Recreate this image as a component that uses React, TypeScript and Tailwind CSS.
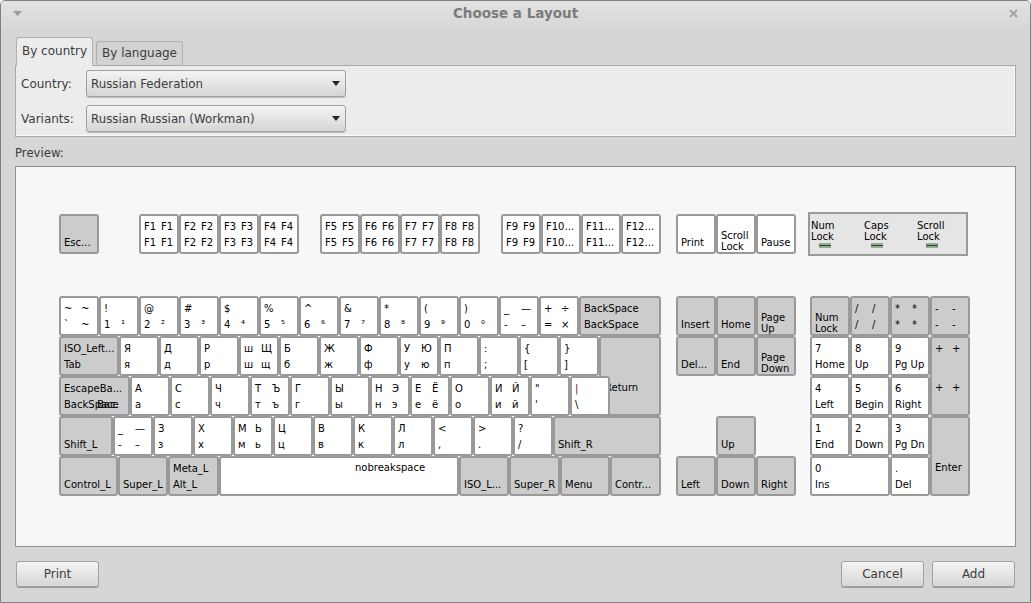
type KeyDef = {
  x: number;
  y: number;
  w?: number;
  h?: number;
  tl?: string;
  bl?: string;
  tr?: string;
  br?: string;
  ml?: string;
  mr?: string;
  gray?: boolean;
};

const Y0 = 214;
const R1 = 296;
const R2 = 336;
const R3 = 376;
const R4 = 416;
const R5 = 456;

const rowOf = (startX: number, y: number, labels: string[][]): KeyDef[] =>
  labels.map(([tl, tr, bl, br], i) => ({ x: startX + i * 40, y, tl, tr, bl, br }));

const fKeys = (startX: number, names: string[]): KeyDef[] =>
  names.map((n, i) => {
    const long = n.length > 3;
    return { x: startX + i * 40, y: Y0, tl: n, tr: long ? "" : n, bl: n, br: long ? "" : n };
  });

const keys: KeyDef[] = [
  { x: 59, y: Y0, bl: "Esc...", gray: true },
  ...fKeys(139, ["F1", "F2", "F3", "F4"]),
  ...fKeys(320, ["F5", "F6", "F7", "F8"]),
  ...fKeys(501, ["F9", "F10...", "F11...", "F12..."]),
  { x: 676, y: Y0, bl: "Print" },
  { x: 716, y: Y0, bl: "Scroll\nLock" },
  { x: 756, y: Y0, bl: "Pause" },

  ...rowOf(59, R1, [
    ["~", "~", "`", "~"],
    ["!", "", "1", "¹"],
    ["@", "", "2", "²"],
    ["#", "", "3", "³"],
    ["$", "", "4", "⁴"],
    ["%", "", "5", "⁵"],
    ["^", "", "6", "⁶"],
    ["&", "", "7", "⁷"],
    ["*", "", "8", "⁸"],
    ["(", "", "9", "⁹"],
    [")", "", "0", "⁰"],
    ["_", "—", "-", "–"],
    ["+", "÷", "=", "×"],
  ]),
  { x: 579, y: R1, w: 82, tl: "BackSpace", bl: "BackSpace", gray: true },

  // Return goes first: the third row sits on top of it
  { x: 599, y: R2, w: 62, h: 80, ml: "Return", gray: true },
  { x: 59, y: R2, w: 60, tl: "ISO_Left...", bl: "Tab", gray: true },
  ...rowOf(119, R2, [
    ["Я", "", "я", ""],
    ["Д", "", "д", ""],
    ["Р", "", "р", ""],
    ["ш", "Щ", "ш", "щ"],
    ["Б", "", "б", ""],
    ["Ж", "", "ж", ""],
    ["Ф", "", "ф", ""],
    ["У", "Ю", "у", "ю"],
    ["П", "", "п", ""],
    [":", "", ";", ""],
    ["{", "", "[", ""],
    ["}", "", "]", ""],
  ]),

  { x: 59, y: R3, w: 71, tl: "EscapeBa...", bl: "BackSpace", br: "Bac.", gray: true },
  ...rowOf(130, R3, [
    ["А", "", "а", ""],
    ["С", "", "с", ""],
    ["Ч", "", "ч", ""],
    ["Т", "Ъ", "т", "ъ"],
    ["Г", "", "г", ""],
    ["Ы", "", "ы", ""],
    ["Н", "Э", "н", "э"],
    ["Е", "Ё", "е", "ё"],
    ["О", "", "о", ""],
    ["И", "Й", "и", "й"],
    ["\"", "", "'", ""],
    ["|", "", "\\", ""],
  ]),

  { x: 59, y: R4, w: 54, bl: "Shift_L", gray: true },
  ...rowOf(113, R4, [
    ["_", "—", "-", "–"],
    ["З", "", "з", ""],
    ["Х", "", "х", ""],
    ["М", "Ь", "м", "ь"],
    ["Ц", "", "ц", ""],
    ["В", "", "в", ""],
    ["К", "", "к", ""],
    ["Л", "", "л", ""],
    ["<", "", ",", ""],
    [">", "", ".", ""],
    ["?", "", "/", ""],
  ]),
  { x: 553, y: R4, w: 108, bl: "Shift_R", gray: true },

  { x: 59, y: R5, w: 59, bl: "Control_L", gray: true },
  { x: 118, y: R5, w: 50, bl: "Super_L", gray: true },
  { x: 168, y: R5, w: 51, tl: "Meta_L", bl: "Alt_L", gray: true },
  { x: 219, y: R5, w: 240 },
  { x: 459, y: R5, w: 50, bl: "ISO_L...", gray: true },
  { x: 509, y: R5, w: 51, bl: "Super_R", gray: true },
  { x: 560, y: R5, w: 50, bl: "Menu", gray: true },
  { x: 610, y: R5, w: 51, bl: "Contr...", gray: true },

  { x: 676, y: R1, bl: "Insert", gray: true },
  { x: 716, y: R1, bl: "Home", gray: true },
  { x: 756, y: R1, bl: "Page\nUp", gray: true },
  { x: 676, y: R2, bl: "Del...", gray: true },
  { x: 716, y: R2, bl: "End", gray: true },
  { x: 756, y: R2, bl: "Page\nDown", gray: true },
  { x: 716, y: R4, bl: "Up", gray: true },
  { x: 676, y: R5, bl: "Left", gray: true },
  { x: 716, y: R5, bl: "Down", gray: true },
  { x: 756, y: R5, bl: "Right", gray: true },

  { x: 810, y: R1, bl: "Num\nLock", gray: true },
  { x: 850, y: R1, tl: "/", tr: "/", bl: "/", br: "/", gray: true },
  { x: 890, y: R1, tl: "*", tr: "*", bl: "*", br: "*", gray: true },
  { x: 930, y: R1, tl: "-", tr: "-", bl: "-", br: "-", gray: true },
  { x: 810, y: R2, tl: "7", bl: "Home" },
  { x: 850, y: R2, tl: "8", bl: "Up" },
  { x: 890, y: R2, tl: "9", bl: "Pg Up" },
  { x: 930, y: R2, h: 80, tl: "+", tr: "+", ml: "+", mr: "+", gray: true },
  { x: 810, y: R3, tl: "4", bl: "Left" },
  { x: 850, y: R3, tl: "5", bl: "Begin" },
  { x: 890, y: R3, tl: "6", bl: "Right" },
  { x: 810, y: R4, tl: "1", bl: "End" },
  { x: 850, y: R4, tl: "2", bl: "Down" },
  { x: 890, y: R4, tl: "3", bl: "Pg Dn" },
  { x: 930, y: R4, h: 80, ml: "Enter", gray: true },
  { x: 810, y: R5, w: 80, tl: "0", bl: "Ins" },
  { x: 890, y: R5, tl: ".", bl: "Del" },
];

// key coordinates above are page pixels, this is the preview's inner corner
const OX = 16;
const OY = 167;

const Label = ({ text, left, top }: { text: string; left: number; top: number }) => (
  <span
    className={`absolute whitespace-pre leading-none ${text === "|" ? "text-[#7a1010]" : ""}`}
    style={{ left, top }}
  >
    {text}
  </span>
);

const Key = ({ k }: { k: KeyDef }) => {
  const w = k.w ?? 40;
  const h = k.h ?? 40;
  const twoLine = k.bl?.includes("\n");
  return (
    <div
      className={`absolute rounded-[3px] border-2 border-[#999999] ${k.gray ? "bg-[#cccccc]" : "bg-white"}`}
      style={{ left: k.x - OX, top: k.y - OY, width: w, height: h }}
    >
      {k.tl && <Label text={k.tl} left={3} top={6} />}
      {k.tr && <Label text={k.tr} left={20} top={6} />}
      {k.ml && <Label text={k.ml} left={k.ml === "Return" ? 4 : 3} top={45} />}
      {k.mr && <Label text={k.mr} left={20} top={45} />}
      {k.bl && !twoLine && <Label text={k.bl} left={3} top={22} />}
      {k.bl && twoLine && (
        <span className="absolute left-[3px] top-[14px] whitespace-pre text-[10px] leading-[11px]">{k.bl}</span>
      )}
      {k.br && <Label text={k.br} left={k.tl === "EscapeBa..." ? 36 : 20} top={22} />}
    </div>
  );
};

const Combo = ({ value }: { value: string }) => (
  <div className="flex h-[27px] w-[260px] items-center justify-between rounded-[3px] border border-[#a0a0a0] bg-gradient-to-b from-[#f4f4f4] to-[#d6d6d6] pl-[4px] pr-[5px] text-[11.8px] shadow-[0_1px_0_#bbbbbb]">
    <span className="pt-[2px]">{value}</span>
    <svg width="8" height="5" viewBox="0 0 8 5">
      <path d="M0 0h8L4 5z" fill="#222222" />
    </svg>
  </div>
);

const Btn = ({ label }: { label: string }) => (
  <button className="h-[26px] w-[83px] rounded-[3px] border border-[#a0a0a0] bg-gradient-to-b from-[#f4f4f4] to-[#d6d6d6] text-[#3c3c3c] shadow-[0_1px_0_#999999]">
    {label}
  </button>
);

const Led = ({ x, top, bottom, bar }: { x: number; top: string; bottom: string; bar: number }) => (
  <div className="absolute top-[6px] text-[10px] leading-[11px]" style={{ left: x }}>
    <div className="whitespace-pre">{top}</div>
    <div className="whitespace-pre">{bottom}</div>
    <div className="mt-[1px] flex h-[5px] w-[12px] items-center bg-[#9aa89a]" style={{ marginLeft: bar }}>
      <div className="h-px w-full bg-[#0b5a0b]" />
    </div>
  </div>
);

export default function App() {
  return (
    <div className="flex h-[603px] w-[1031px] flex-col overflow-hidden rounded-t-[5px] border border-[#7f7f7f] bg-[#d6d6d6] font-['DejaVu_Sans',sans-serif] text-[12px] text-[#3c3c3c]">
      <div className="relative flex h-[26px] shrink-0 items-center justify-center bg-gradient-to-b from-[#e2e2e2] to-[#d8d8d8] pb-[1px]">
        <svg className="absolute left-[12px] top-[10px]" width="9" height="5" viewBox="0 0 9 5">
          <path d="M0 0h9L4.5 5z" fill="#9a9a9a" />
        </svg>
        <span className="text-[13.5px] font-bold text-[#7b7b7b]">Choose a Layout</span>
        <svg className="absolute right-[12px] top-[8px]" width="9" height="9" viewBox="0 0 9 9">
          <path d="M1 1l7 7M8 1l-7 7" stroke="#a4a4a4" strokeWidth="2" />
        </svg>
      </div>

      <div className="flex flex-1 flex-col px-[14px]">
        <div className="relative mt-[11px] flex h-[27px] items-end gap-[3px] pl-[1px]">
          <div className="z-10 flex h-[29px] w-[77px] translate-y-px items-center justify-center rounded-t-[3px] border border-b-0 border-[#b0b0b0] bg-[#ececec] pb-[3px]">
            By country
          </div>
          <div className="flex h-[24px] w-[87px] items-center justify-center rounded-t-[3px] border border-b-0 border-[#b0b0b0] bg-[#d2d2d2] pb-[2px]">
            By language
          </div>
        </div>
        <div className="flex h-[72px] flex-col gap-[8px] border border-[#a8a8a8] bg-[#ececec] pl-[5px] pt-[4px] shadow-[inset_-1px_-1px_0_#fafafa]">
          <div className="flex items-center">
            <span className="w-[65px]">Country:</span>
            <Combo value="Russian Federation" />
          </div>
          <div className="flex items-center">
            <span className="w-[65px]">Variants:</span>
            <Combo value="Russian Russian (Workman)" />
          </div>
        </div>
        <div className="mt-[8px] h-[21px] text-[11.7px]">Preview:</div>
        <div className="relative h-[381px] border border-[#909090] bg-[#f7f7f7] text-[10px] leading-none text-black">
          {keys.map((k, i) => (
            <Key key={i} k={k} />
          ))}
          <div className="absolute left-[792px] top-[45px] h-[44px] w-[160px] border-2 border-[#999999] bg-[#e5e5e5]">
            <Led x={1} top="Num" bottom="Lock" bar={8} />
            <Led x={54} top="Caps" bottom="Lock" bar={7} />
            <Led x={107} top="Scroll" bottom="Lock" bar={9} />
          </div>
          <span className="absolute left-[339px] top-[296px]">nobreakspace</span>
        </div>
        <div className="mt-[14px] flex justify-between px-[1px]">
          <Btn label="Print" />
          <div className="flex gap-[8px]">
            <Btn label="Cancel" />
            <Btn label="Add" />
          </div>
        </div>
      </div>
    </div>
  );
}
